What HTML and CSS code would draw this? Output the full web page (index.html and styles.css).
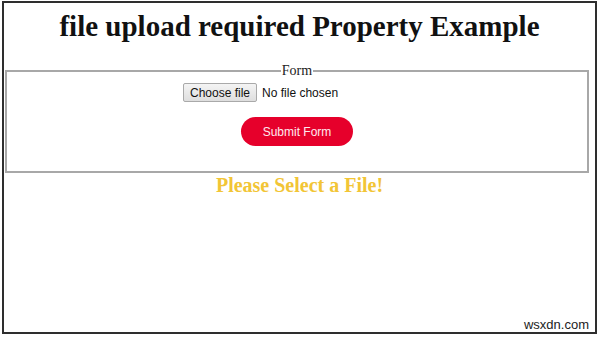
FILE: index.html
```html
<!DOCTYPE html>
<html lang="en">
<head>
    <meta charset="UTF-8">
    <meta name="viewport" content="width=device-width, initial-scale=1.0">
    <title>file upload required Property</title>
    <link rel="stylesheet" href="styles.css">
</head>
<body>
    <div class="frame">
        <h1>file upload required Property Example</h1>

        <fieldset class="form-box">
            <legend>Form</legend>
            <div class="file-row">
                <label class="file-input">
                    <span class="file-btn">Choose file</span>
                    <span class="file-name">No file chosen</span>
                </label>
            </div>
            <div class="submit-row">
                <button type="button" class="submit-btn">Submit Form</button>
            </div>
        </fieldset>

        <h3 class="message">Please Select a File!</h3>

        <span class="watermark">wsxdn.com</span>
    </div>
</body>
</html>
```

FILE: styles.css
```css
* {
    box-sizing: border-box;
}

body {
    margin: 0;
    background-color: #fff;
    font-family: "Liberation Serif", "Times New Roman", serif;
}

.frame {
    position: relative;
    width: 595px;
    height: 333px;
    margin: 1px 0 0 2px;
    border: 2px solid #2e2e2e;
    overflow: hidden;
}

h1 {
    margin: 7px 0 20px 0;
    font-size: 29px;
    font-weight: bold;
    text-align: center;
    color: #111;
}

.form-box {
    margin: 0 6px 0 1px;
    padding: 4px 0 25px 0;
    border: 2px solid #a8a8a8;
}

legend {
    margin: 0 auto;
    padding: 0 1px;
    font-size: 14px;
    color: #222;
}

.file-row {
    text-align: center;
}

.file-input {
    display: inline-flex;
    align-items: center;
    width: 228px;
    font-family: "Liberation Sans", Arial, sans-serif;
    font-size: 12px;
    color: #111;
}

.file-btn {
    padding: 2px 6px;
    height: 19px;
    line-height: 14px;
    border: 1px solid #a9a9a9;
    border-radius: 2px;
    background: linear-gradient(#f4f4f4, #dedede);
}

.file-name {
    margin-left: 5px;
}

.submit-row {
    margin-top: 15px;
    text-align: center;
}

.submit-btn {
    width: 112px;
    height: 29px;
    border: none;
    border-radius: 15px;
    background-color: #e6002b;
    color: #ffe8ee;
    font-family: "Liberation Sans", Arial, sans-serif;
    font-size: 12px;
    cursor: pointer;
}

.message {
    margin: 1px 0 0 0;
    font-size: 20px;
    font-weight: bold;
    text-align: center;
    color: #f2c536;
}

.watermark {
    position: absolute;
    right: 6px;
    bottom: 0;
    font-family: "Liberation Sans", Arial, sans-serif;
    font-size: 13px;
    color: #222;
}
```
